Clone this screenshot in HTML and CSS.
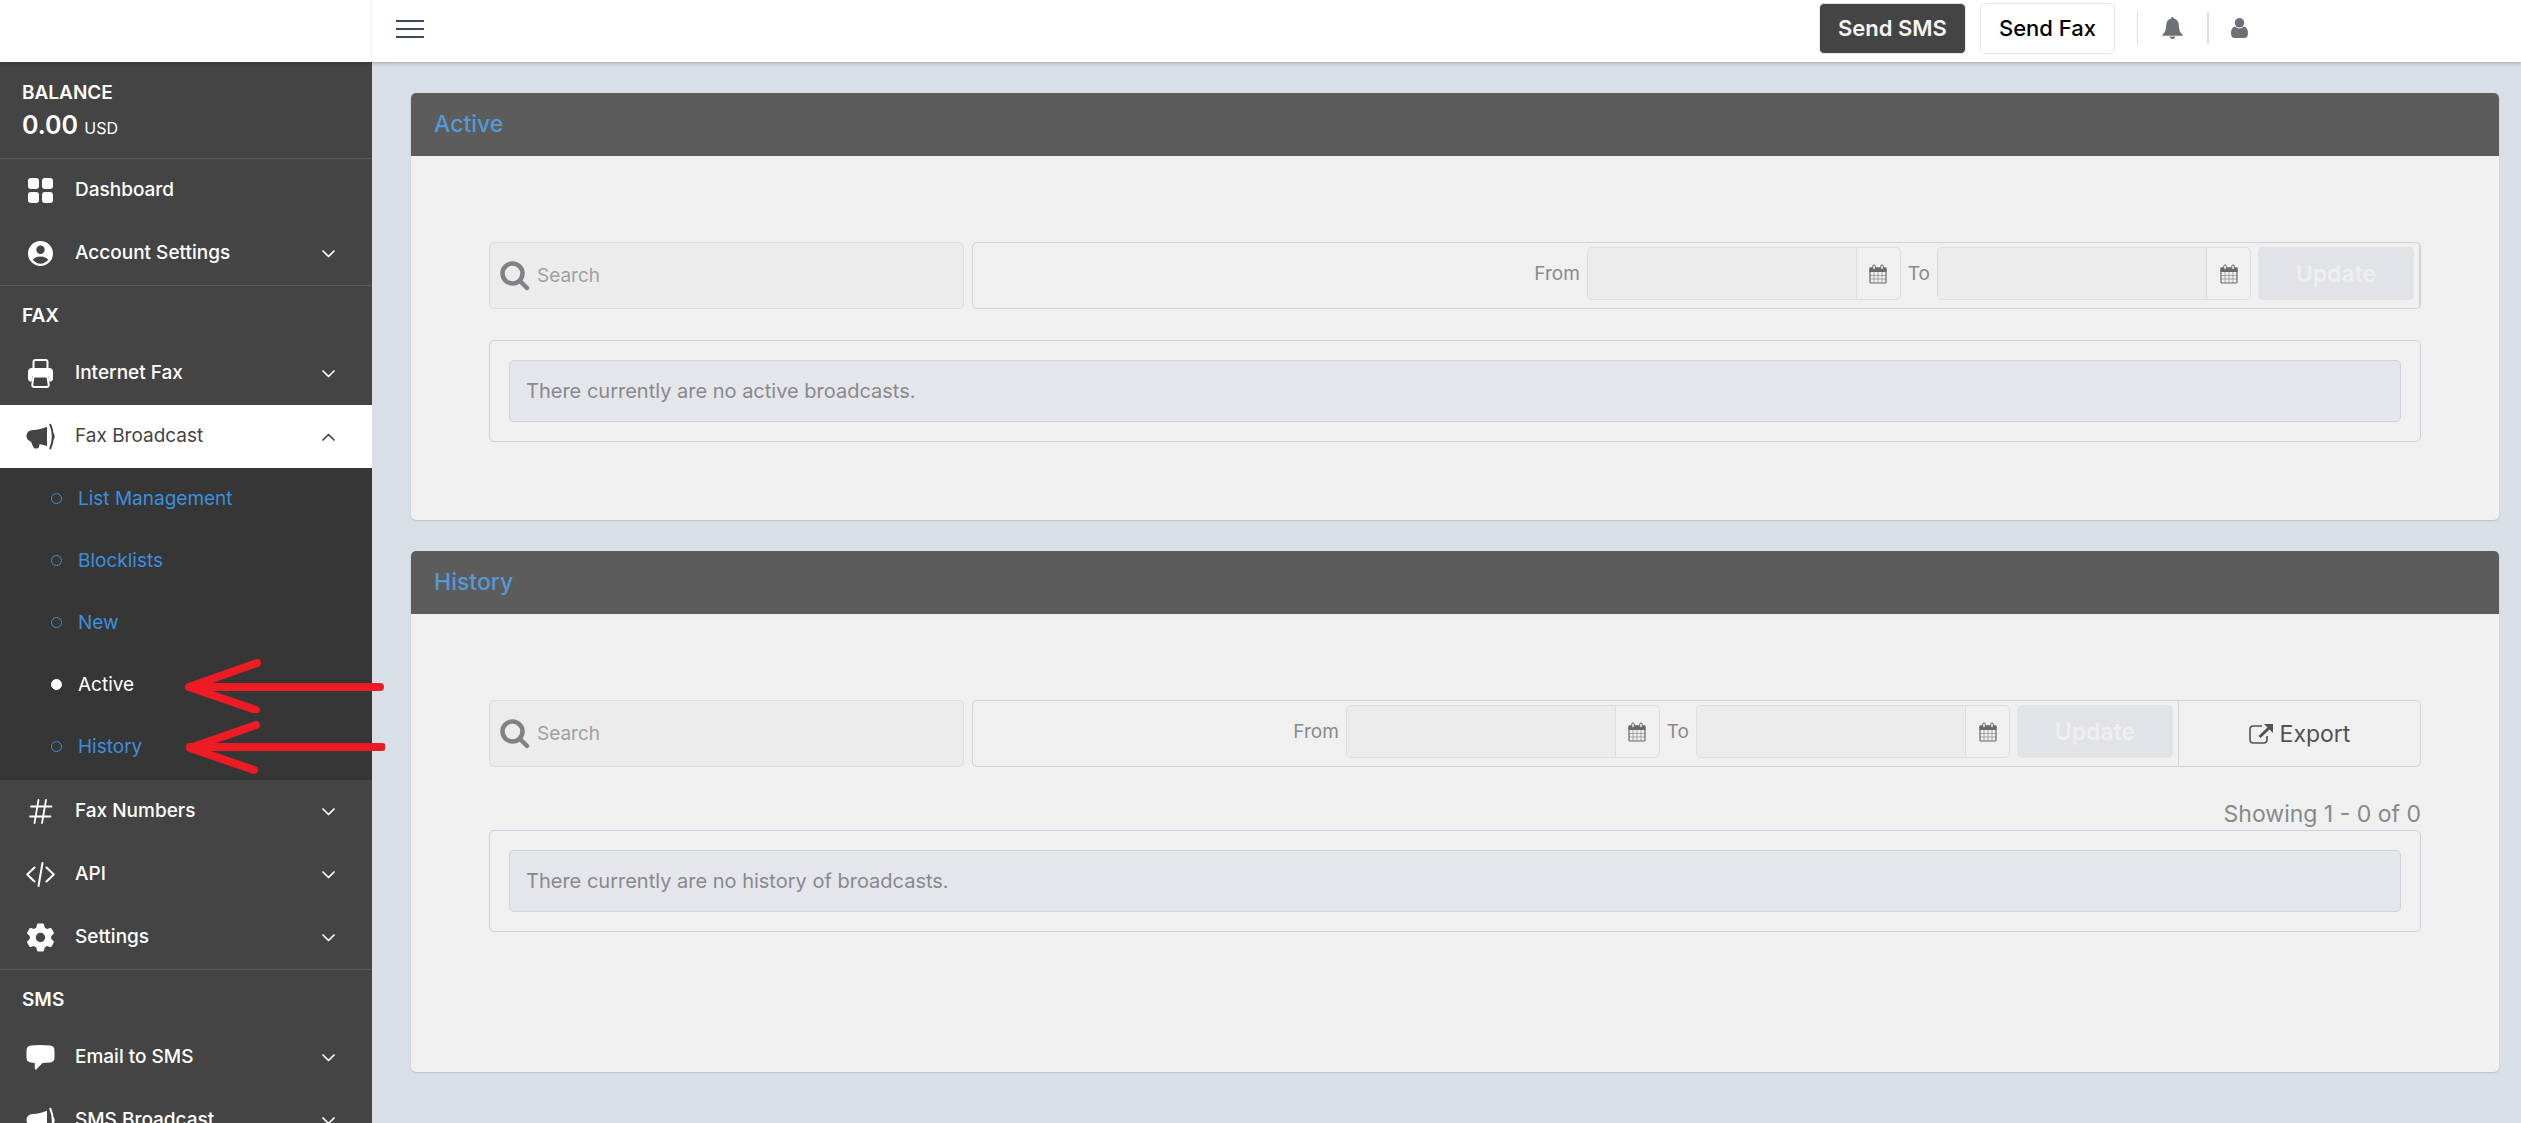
FILE: index.html
```html
<!DOCTYPE html>
<html lang="en">
  <head>
    <meta charset="UTF-8" />
    <meta name="viewport" content="width=device-width, initial-scale=1.0" />
    <title>Fax Broadcast</title>
    <link rel="stylesheet" href="styles.css" />
  </head>
  <body>
    <!-- shared icons -->
    <svg class="sprite" aria-hidden="true">
      <symbol id="chevron" viewBox="0 0 13 8">
        <path d="M1 1l5.500 5.500L12 1" fill="none" stroke="currentColor" stroke-width="1.700" stroke-linecap="round" stroke-linejoin="round" />
      </symbol>
      <symbol id="horn" viewBox="0 0 29 26">
        <path d="M21 3.200C16 5.200 12 6.400 7 6.600C3 6.800 .5 9.300 .5 12.600c0 2.400 1.400 4.200 3.500 5.200c.4 0 .9.200 1.300 1.200l1.900 4.200c.5 1.200 1.500 1.900 2.900 1.900c1.600 0 3-.8 3.100-2.400l.2-1.900c2.800.3 5.300.9 7.600 2z" fill="currentColor" />
        <path d="M24.300 1.200c3.200 7.500 3.200 16.200 0 23.700" fill="none" stroke="currentColor" stroke-width="2" stroke-linecap="round" />
        <path d="M27 9.500c2.200 1 2.200 6 0 7z" fill="currentColor" />
      </symbol>
      <symbol id="search" viewBox="0 0 30 30">
        <circle cx="12.500" cy="12.500" r="10" fill="none" stroke="currentColor" stroke-width="4.500" />
        <path d="M20 20l7 7" stroke="currentColor" stroke-width="4.500" stroke-linecap="round" />
      </symbol>
      <symbol id="calendar" viewBox="0 0 18 20">
        <rect x="1" y="4" width="16" height="15" rx="1" fill="none" stroke="currentColor" stroke-width="1.200" />
        <path d="M.5 3.500h17v4.500H.5z" fill="currentColor" />
        <path d="M5 8v11M9 8v11M13 8v11M1 11.500h16M1 15h16" stroke="currentColor" stroke-width=".7" opacity=".75" />
        <rect x="3.700" y="1" width="2.600" height="4.500" rx="1.200" fill="#f0f0f0" stroke="currentColor" />
        <rect x="11.700" y="1" width="2.600" height="4.500" rx="1.200" fill="#f0f0f0" stroke="currentColor" />
      </symbol>
    </svg>

    <header class="topbar">
      <div class="brand"></div>
      <button type="button" class="menu_btn" aria-label="Toggle menu">
        <span></span><span></span><span></span>
      </button>
      <div class="actions">
        <button type="button" class="btn btn_dark">Send SMS</button>
        <button type="button" class="btn btn_light">Send Fax</button>
        <a href="#" class="top_icon" aria-label="Notifications">
          <svg width="21" height="22" viewBox="0 0 21 22"><path d="M10.500 0c.9 0 1.300.6 1.300 1.400C15 2 16.700 4.600 16.800 8c.1 4.500 1 7.400 3.900 9.800v1H.3v-1C3.200 15.400 4.100 12.500 4.200 8C4.300 4.600 6 2 9.200 1.400C9.200.6 9.600 0 10.500 0zM7.700 19.500h5.600c-.3 1.600-1.400 2.500-2.800 2.500s-2.500-.9-2.800-2.500z" fill="currentColor" /></svg>
        </a>
        <a href="#" class="top_icon user_icon" aria-label="Profile">
          <svg width="17" height="20" viewBox="0 0 17 20"><circle cx="8.500" cy="4.800" r="4.800" fill="currentColor" /><path d="M4 8.500c2.600 2.600 6.400 2.600 9 0c2.600.5 4 3.200 4 6.800c0 3-1.400 4.700-3.600 4.700H3.600C1.400 20 0 18.300 0 15.300C0 11.700 1.400 9 4 8.500z" fill="currentColor" /></svg>
        </a>
      </div>
    </header>

    <div class="layout">
      <nav class="sidebar">
        <div class="balance">
          <h2 class="nav_title">BALANCE</h2>
          <p class="amount">0.00 <span>USD</span></p>
        </div>

        <ul class="nav_group">
          <li>
            <a href="#" class="nav_link">
              <svg class="nav_icon" viewBox="0 0 29 29"><g fill="currentColor"><rect x="2" y="2" width="11" height="11" rx="3" /><rect x="16" y="2" width="11" height="11" rx="3" /><rect x="2" y="16" width="11" height="11" rx="3" /><rect x="16" y="16" width="11" height="11" rx="3" /></g></svg>
              <span>Dashboard</span>
            </a>
          </li>
          <li>
            <a href="#" class="nav_link">
              <svg class="nav_icon" viewBox="0 0 29 29"><path fill-rule="evenodd" d="M14.500 2a12.500 12.500 0 1 0 0 25a12.500 12.500 0 0 0 0-25zm0 4.500a4.200 4.200 0 1 1 0 8.400a4.200 4.200 0 0 1 0-8.400zm0 11c3.800 0 6.600 1.400 7.700 3.300c-1.800 2.400-4.500 3.900-7.700 3.900s-5.900-1.500-7.700-3.900c1.100-1.900 3.900-3.300 7.700-3.300z" fill="currentColor" /></svg>
              <span>Account Settings</span>
              <svg class="chevron"><use href="#chevron" /></svg>
            </a>
          </li>
        </ul>

        <h2 class="nav_title nav_heading">FAX</h2>
        <ul class="nav_group">
          <li>
            <a href="#" class="nav_link">
              <svg class="nav_icon" viewBox="0 0 29 29"><path d="M7.500 9V3q0-2 2-2h10q2 0 2 2v6" fill="none" stroke="currentColor" stroke-width="2" /><path d="M6 9h17q4 0 4 4v6.500q0 3-3.500 3.300L22.500 17h-16l-1 5.800Q2 22.500 2 19.500V13q0-4 4-4z" fill="currentColor" /><path d="M7.500 17.500h14l1.200 8q.2 2.500-2 2.500H8.300q-2.200 0-2-2.500z" fill="none" stroke="currentColor" stroke-width="2" /></svg>
              <span>Internet Fax</span>
              <svg class="chevron"><use href="#chevron" /></svg>
            </a>
          </li>
          <li>
            <a href="#" class="nav_link open">
              <svg class="nav_icon"><use href="#horn" /></svg>
              <span>Fax Broadcast</span>
              <svg class="chevron"><use href="#chevron" /></svg>
            </a>
            <ul class="subnav">
              <li><a href="#">List Management</a></li>
              <li><a href="#">Blocklists</a></li>
              <li><a href="#">New</a></li>
              <li>
                <a href="#" class="current">Active</a>
                <svg class="arrow" viewBox="0 0 200 54"><path d="M72 4L4 28h191M4 28l67 23" /></svg>
              </li>
              <li>
                <a href="#">History</a>
                <svg class="arrow" viewBox="0 0 200 54"><path d="M71 4L5 27l64 22M5 26h192" /></svg>
              </li>
            </ul>
          </li>
          <li>
            <a href="#" class="nav_link">
              <svg class="nav_icon" viewBox="0 0 29 29"><path d="M12.500 3l-4 23M20 3l-4 23M5 9.500h20.500M4 19.500h20.500" fill="none" stroke="currentColor" stroke-width="1.800" stroke-linecap="round" /></svg>
              <span>Fax Numbers</span>
              <svg class="chevron"><use href="#chevron" /></svg>
            </a>
          </li>
          <li>
            <a href="#" class="nav_link">
              <svg class="nav_icon" viewBox="0 0 29 29"><path d="M8.500 7.500L1.200 14.500l7.300 7M20.500 7.500l7.300 7l-7.300 7M16.500 3l-4 23" fill="none" stroke="currentColor" stroke-width="2" stroke-linecap="round" stroke-linejoin="round" /></svg>
              <span>API</span>
              <svg class="chevron"><use href="#chevron" /></svg>
            </a>
          </li>
          <li>
            <a href="#" class="nav_link">
              <svg class="nav_icon" viewBox="0 0 29 29"><path fill-rule="evenodd" d="M12.300.5h4.400q1 0 1.300 1l.7 3.100l2.300 1.300l3-.9q1-.3 1.600.6l2.100 3.700q.5 1-.2 1.700L25.200 13v3l2.300 2q.7.700.2 1.700l-2.100 3.700q-.6.900-1.600.6l-3-.9l-2.300 1.300l-.7 3.100q-.3 1-1.300 1h-4.400q-1 0-1.300-1l-.7-3.100L8 23.100l-3 .9q-1 .3-1.600-.6l-2.100-3.700q-.5-1 .2-1.700l2.300-2v-3l-2.300-2Q.800 10.300 1.300 9.300l2.100-3.700Q4 4.700 5 5l3 .9l2.300-1.300l.7-3.100q.3-1 1.300-1zm2.200 9.300a4.700 4.700 0 1 0 0 9.400a4.700 4.700 0 0 0 0-9.400z" fill="currentColor" /></svg>
              <span>Settings</span>
              <svg class="chevron"><use href="#chevron" /></svg>
            </a>
          </li>
        </ul>

        <h2 class="nav_title nav_heading">SMS</h2>
        <ul class="nav_group">
          <li>
            <a href="#" class="nav_link">
              <svg class="nav_icon" viewBox="0 0 29 29"><path d="M5 2.500q9.500-1 19 0q4.500.5 4.500 5v7q0 4.500-4.500 5q-4 .4-7.500.5l-6 6.300q-1.500 1-1.700-.8V20L5 19.500q-4.500-.5-4.500-5v-7q0-4.500 4.500-5z" fill="currentColor" /></svg>
              <span>Email to SMS</span>
              <svg class="chevron"><use href="#chevron" /></svg>
            </a>
          </li>
          <li>
            <a href="#" class="nav_link">
              <svg class="nav_icon"><use href="#horn" /></svg>
              <span>SMS Broadcast</span>
              <svg class="chevron"><use href="#chevron" /></svg>
            </a>
          </li>
        </ul>
      </nav>

      <main class="content">
        <section class="card">
          <h1 class="card_title">Active</h1>
          <div class="card_body">
            <form class="filters" action="#">
              <label class="search">
                <svg><use href="#search" /></svg>
                <input type="text" placeholder="Search" aria-label="Search active broadcasts" />
              </label>
              <div class="filter_bar">
                <div class="dates">
                  <label for="active_from">From</label>
                  <div class="date_field">
                    <input type="text" id="active_from" />
                    <button type="button" aria-label="Pick from date"><svg><use href="#calendar" /></svg></button>
                  </div>
                  <label for="active_to">To</label>
                  <div class="date_field">
                    <input type="text" id="active_to" />
                    <button type="button" aria-label="Pick to date"><svg><use href="#calendar" /></svg></button>
                  </div>
                  <button type="submit" class="update" disabled>Update</button>
                </div>
              </div>
            </form>
            <div class="results">
              <p class="message">There currently are no active broadcasts.</p>
            </div>
          </div>
        </section>

        <section class="card history">
          <h1 class="card_title">History</h1>
          <div class="card_body">
            <form class="filters" action="#">
              <label class="search">
                <svg><use href="#search" /></svg>
                <input type="text" placeholder="Search" aria-label="Search history" />
              </label>
              <div class="filter_bar">
                <div class="dates">
                  <label for="history_from">From</label>
                  <div class="date_field">
                    <input type="text" id="history_from" />
                    <button type="button" aria-label="Pick from date"><svg><use href="#calendar" /></svg></button>
                  </div>
                  <label for="history_to">To</label>
                  <div class="date_field">
                    <input type="text" id="history_to" />
                    <button type="button" aria-label="Pick to date"><svg><use href="#calendar" /></svg></button>
                  </div>
                  <button type="submit" class="update" disabled>Update</button>
                </div>
                <button type="button" class="export">
                  <svg viewBox="0 0 24 20"><path d="M13 2H4.500Q1 2 1 5.500v10Q1 19 4.500 19h10q3.500 0 3.500-3.500V12" fill="none" stroke="currentColor" stroke-width="1.600" /><path d="M10.500 13L20 4" stroke="currentColor" stroke-width="3" /><path d="M15 0h9v9z" fill="currentColor" /></svg>
                  Export
                </button>
              </div>
            </form>
            <p class="count">Showing 1 - 0 of 0</p>
            <div class="results">
              <p class="message">There currently are no history of broadcasts.</p>
            </div>
          </div>
        </section>
      </main>
    </div>
  </body>
</html>
```

FILE: styles.css
```css
* {
  box-sizing: border-box;
  padding: 0;
  margin: 0;
}
body {
  height: 100vh;
  overflow: hidden;
  display: flex;
  flex-direction: column;
  font-family: Inter, "Liberation Sans", sans-serif;
  font-size: 19px;
  background-color: #d9dfe7;
}
button,
input {
  font-family: inherit;
}
a {
  text-decoration: none;
}
ul {
  list-style: none;
}
.sprite {
  display: none;
}

/* top bar */
.topbar {
  flex: 0 0 62px;
  display: flex;
  align-items: center;
  background-color: #fff;
  box-shadow: 0 1px 4px rgba(0, 21, 41, 0.3);
  z-index: 2;
}
.brand {
  width: 372px;
  height: 100%;
  border-right: 1px solid #f2f2f2;
}
.menu_btn {
  width: 28px;
  margin: 0 auto 5px 24px;
  border: none;
  background: none;
  display: flex;
  flex-direction: column;
  gap: 6px;
  cursor: pointer;
}
.menu_btn span {
  height: 2px;
  width: 28px;
  background-color: #3b4863;
}
.actions {
  display: flex;
  align-items: center;
  padding-bottom: 6px;
  margin-right: 273px;
}
.btn {
  height: 51px;
  padding: 0 18px;
  margin-right: 14px;
  border: 1px solid #e4e4ec;
  border-radius: 5px;
  font-size: 22px;
  font-weight: 500;
  cursor: pointer;
}
.btn_dark {
  background-color: #444;
  color: #f5f5f5;
  font-weight: 600;
}
.btn_light {
  background-color: #fff;
  color: #000;
  margin-right: 22px;
}
.top_icon {
  height: 32px;
  display: flex;
  align-items: center;
  padding: 0 24px;
  border-left: 1px solid #dddde0;
  color: #6e7078;
}
.user_icon {
  border-left-width: 2px;
  padding: 0 0 0 22px;
}

/* sidebar */
.layout {
  flex: 1;
  min-height: 0;
  display: flex;
}
.sidebar {
  flex: 0 0 372px;
  min-height: 100%;
  background-color: #444;
  color: #fff;
  z-index: 1;
}
.nav_title {
  font-size: 19px;
  line-height: 22px;
  font-weight: 600;
}
.balance {
  height: 97px;
  padding: 20px 22px 0;
  border-bottom: 1px solid #5a5a5a;
}
.amount {
  margin-top: 6px;
  font-size: 25px;
  line-height: 30px;
  font-weight: 600;
}
.amount span {
  font-size: 16px;
  font-weight: 400;
}
.nav_heading {
  height: 56px;
  padding: 19px 22px 0;
}
.nav_group {
  border-bottom: 1px solid #5a5a5a;
}
.nav_link {
  height: 63px;
  display: flex;
  align-items: center;
  gap: 20px;
  padding: 0 37px 0 26px;
  color: #fff;
  font-weight: 500;
}
.nav_link span {
  flex: 1;
  padding-bottom: 2px;
}
.nav_icon {
  width: 29px;
  height: 29px;
}
.chevron {
  width: 13px;
  height: 8px;
}
.nav_link.open {
  background-color: #fff;
  color: #444;
  font-weight: 400;
}
.open .chevron {
  transform: rotate(180deg);
}
.subnav {
  padding-bottom: 2px;
  background-color: #363636;
}
.subnav li {
  position: relative;
}
.subnav a {
  height: 62px;
  display: flex;
  align-items: center;
  gap: 16px;
  padding: 0 0 1px 51px;
  color: #3d8fde;
}
.subnav a::before {
  content: "";
  width: 9px;
  height: 9px;
  border: 1px solid currentColor;
  border-radius: 50%;
}
.subnav .current {
  color: #fff;
}
.subnav .current::before {
  background-color: #fff;
}
.arrow {
  position: absolute;
  left: 185px;
  top: 5px;
  width: 200px;
  height: 54px;
  fill: none;
  stroke: #ed1c24;
  stroke-width: 8;
  stroke-linecap: round;
  stroke-linejoin: round;
}

/* cards */
.content {
  flex: 1;
  padding: 31px 22px 31px 39px;
}
.card {
  margin-bottom: 31px;
  border-radius: 5px;
  background-color: #f0f0f0;
  box-shadow: 0 1px 2px rgba(0, 0, 0, 0.15);
}
.card_title {
  height: 63px;
  padding: 0 23px;
  border-radius: 5px 5px 0 0;
  background-color: #5c5c5c;
  color: #5499d8;
  font-size: 23px;
  line-height: 63px;
  font-weight: 500;
}
.card_body {
  padding: 86px 78px 78px;
}
.history .card_body {
  padding-bottom: 140px;
}
.filters {
  display: flex;
  gap: 8px;
}
.search {
  width: calc(25% - 8px);
  height: 67px;
  display: flex;
  align-items: center;
  gap: 7px;
  padding: 0 10px;
  border: 1px solid #dedede;
  border-radius: 5px;
  background-color: #ececec;
  color: #808285;
}
.search svg {
  width: 30px;
  height: 30px;
}
.search input {
  flex: 1;
  min-width: 0;
  border: none;
  outline: none;
  background: none;
  font-size: 19px;
}
.search input::placeholder {
  color: #a0a0a2;
}
.filter_bar {
  flex: 1;
  height: 67px;
  display: flex;
  border: 1px solid #d3d3d5;
  border-radius: 5px;
}
.dates {
  flex: 1;
  display: flex;
  align-items: flex-start;
  justify-content: flex-end;
  gap: 7px;
  padding: 4px 5px 0 0;
  border-right: 1px solid #d3d3d5;
}
.dates label {
  font-size: 19px;
  line-height: 53px;
  color: #88898b;
}
.date_field {
  width: 314px;
  height: 53px;
  display: flex;
  border: 1px solid #dedee0;
  border-radius: 5px;
}
.date_field input {
  flex: 1;
  min-width: 0;
  padding: 0 12px;
  border: none;
  border-right: 1px solid #dedee0;
  border-radius: 4px 0 0 4px;
  background-color: #ececec;
  font-size: 19px;
}
.date_field button {
  width: 43px;
  border: none;
  background: none;
  color: #696969;
}
.date_field svg {
  width: 18px;
  height: 20px;
  vertical-align: middle;
}
.update {
  width: 156px;
  height: 53px;
  border: none;
  border-radius: 5px;
  background-color: #e2e3e7;
  color: #efefef;
  font-size: 23px;
  font-weight: 600;
}
.export {
  width: 241px;
  display: flex;
  align-items: center;
  justify-content: center;
  gap: 7px;
  border: none;
  background: none;
  color: #505256;
  font-size: 23px;
  cursor: pointer;
}
.export svg {
  width: 24px;
  height: 20px;
}
.count {
  margin-top: 32px;
  font-size: 23px;
  line-height: 30px;
  text-align: right;
  color: #88898b;
}
.results {
  margin-top: 31px;
  padding: 19px;
  border: 1px solid #cdd1da;
  border-radius: 5px;
}
.count + .results {
  margin-top: 1px;
}
.message {
  height: 62px;
  padding: 0 16px;
  border: 1px solid #cdd1da;
  border-radius: 5px;
  background-color: #e5e6eb;
  color: #88898b;
  font-size: 20px;
  line-height: 60px;
}
```
